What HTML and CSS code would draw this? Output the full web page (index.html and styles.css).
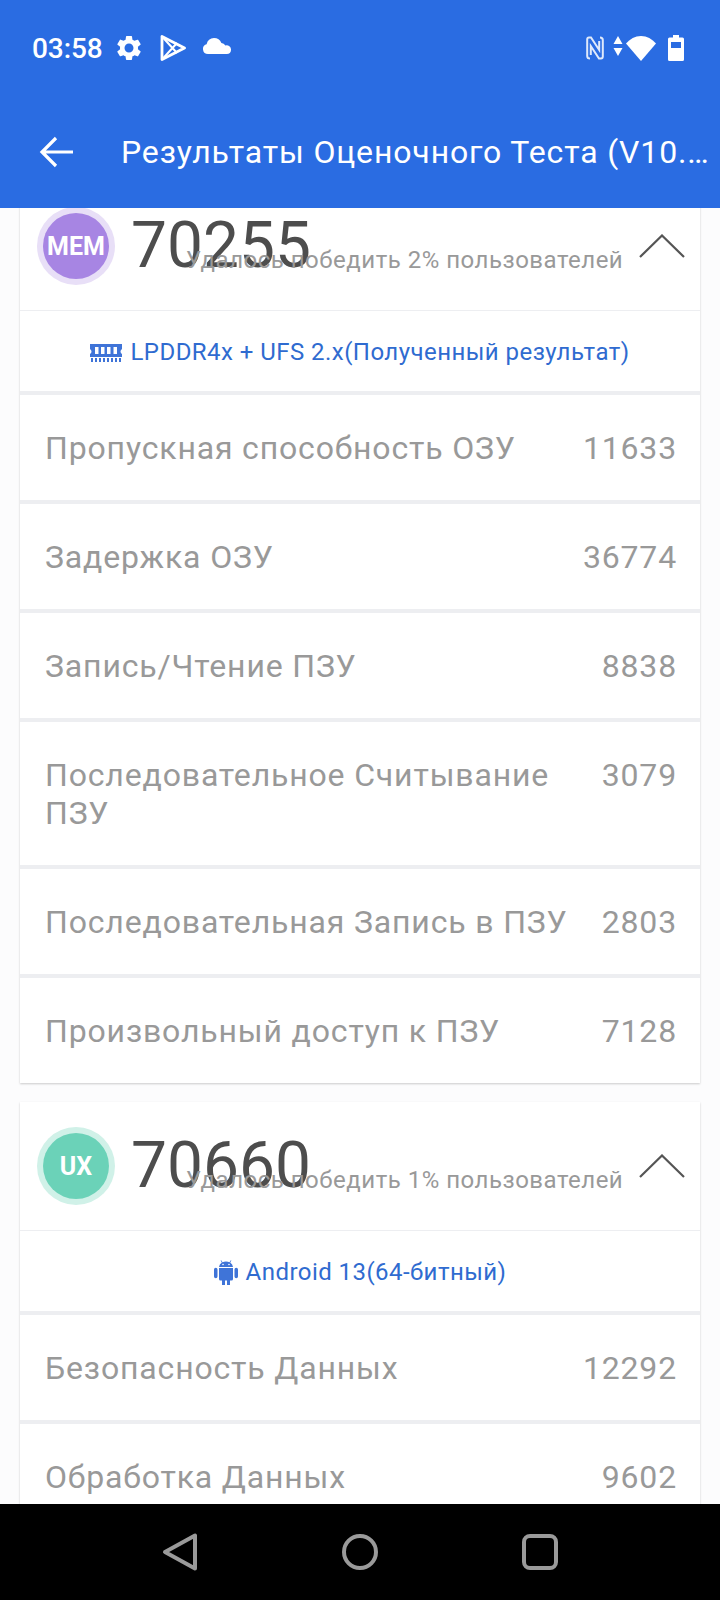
FILE: index.html
```html
<!DOCTYPE html>
<html lang="ru">
<head>
<meta charset="utf-8">
<title>Результаты Оценочного Теста</title>
<link rel="stylesheet" href="styles.css">
</head>
<body>
<div class="app">
  <header class="appbar">
    <div class="status">
      <span class="time">03:58</span>
      <svg class="ic-gear" viewBox="2.4 1.6 19.2 20.8"><path fill="#fff" d="M19.14 12.94c.04-.3.06-.61.06-.94 0-.32-.02-.64-.07-.94l2.03-1.58c.18-.14.23-.41.12-.61l-1.92-3.32c-.12-.22-.37-.29-.59-.22l-2.39.96c-.5-.38-1.03-.7-1.62-.94l-.36-2.54c-.04-.24-.24-.41-.48-.41h-3.84c-.24 0-.43.17-.47.41l-.36 2.54c-.59.24-1.13.57-1.62.94l-2.39-.96c-.22-.08-.47 0-.59.22L2.74 8.87c-.12.21-.08.47.12.61l2.03 1.58c-.05.3-.09.63-.09.94s.02.64.07.94l-2.03 1.58c-.18.14-.23.41-.12.61l1.92 3.32c.12.22.37.29.59.22l2.39-.96c.5.38 1.03.7 1.62.94l.36 2.54c.05.24.24.41.48.41h3.84c.24 0 .44-.17.47-.41l.36-2.54c.59-.24 1.13-.56 1.62-.94l2.39.96c.22.08.47 0 .59-.22l1.92-3.32c.12-.22.07-.47-.12-.61l-2.01-1.58zM12 15.6c-1.98 0-3.6-1.62-3.6-3.6s1.62-3.6 3.6-3.6 3.6 1.62 3.6 3.6-1.62 3.6-3.6 3.6z"/></svg>
      <svg class="ic-play" viewBox="0 0 26 28"><path fill="none" stroke="#fff" stroke-width="2.8" stroke-linejoin="round" d="M2 2.500v23L24.500 14z"/><path fill="none" stroke="#fff" stroke-width="2" d="M2 2.500L17 19M2 25.500L17 9"/></svg>
      <svg class="ic-cloud" viewBox="0 0 28 16"><path fill="#fff" d="M5 16a5 5 0 0 1-1.400-9.800A8 8 0 0 1 11 0a8 8 0 0 1 7.400 5 5.500 5.500 0 0 1 4 2.400A4.400 4.400 0 0 1 28 12a4.200 4.200 0 0 1-4.200 4z"/></svg>
      <span class="status-gap"></span>
      <svg class="ic-nfc" viewBox="0 0 18 24"><path fill="none" stroke="#fff" stroke-width="2" stroke-opacity=".85" d="M4 22.500Q1.200 22.500 1.200 20V3.500Q1.200 1.500 3 1.500H5L13.200 14V5"/><path fill="none" stroke="#fff" stroke-width="2" stroke-opacity=".85" d="M14 1.500Q16.800 1.500 16.800 4V20.500Q16.800 22.500 15 22.500H13L4.800 10V19"/></svg>
      <svg class="ic-arrows" viewBox="0 0 10 20"><path fill="#fff" d="M5 0l4.500 8h-9zM5 20L.5 12h9z"/></svg>
      <svg class="ic-wifi" viewBox="0 0 30 25"><path fill="#fff" d="M15 25L0 7.500C4 3 9 0 15 0s11 3 15 7.500z"/></svg>
      <svg class="ic-batt" viewBox="0 0 16 26"><path fill="#fff" fill-rule="evenodd" d="M5 0h6v2.500h3.500q1.500 0 1.500 1.500v20.500q0 1.500-1.500 1.500h-13Q0 26 0 24.500V4q0-1.500 1.500-1.500H5zM3 7v6h10V7z"/></svg>
    </div>
    <div class="toolbar">
      <svg class="ic-back" viewBox="0 0 34 32"><path fill="none" stroke="#fff" stroke-width="3.200" d="M34 16H3M17 2L3 16l14 14"/></svg>
      <h1 class="title">Результаты Оценочного Теста (V10.…</h1>
    </div>
  </header>

  <main class="scroller">
    <div class="scroll-inner">
      <section class="card">
        <div class="head">
          <div class="badge badge-mem"><span>MEM</span></div>
          <div class="score">70255</div>
          <div class="beat">Удалось победить 2% пользователей</div>
          <svg class="chev" viewBox="0 0 46 24"><path fill="none" stroke="#555" stroke-width="2.200" d="M1 23L23 1.500 45 23"/></svg>
        </div>
        <div class="info">
          <svg class="ic-ram" viewBox="0 0 32 19"><path fill="#3f74d8" fill-rule="evenodd" d="M0 1h32v5q-1.500 1-1.500 2.500T32 11v3H0v-3q1.500-1 1.500-2.500T0 6zM5 4v7h3.500V4zM11 4v7h3.500V4zM17 4v7h3.500V4zM23.500 4v7H27V4z"/><path fill="#3f74d8" d="M1 15h2v4H1zM5 15h2v4H5zM9 15h2v4H9zM13 15h2v4h-2zM17 15h2v4h-2zM21 15h2v4h-2zM25 15h2v4h-2zM29 15h2v4h-2z"/></svg>
          <span>LPDDR4x + UFS 2.x(Полученный результат)</span>
        </div>
        <div class="row"><div class="label">Пропускная способность ОЗУ</div><div class="value">11633</div></div>
        <div class="row"><div class="label">Задержка ОЗУ</div><div class="value">36774</div></div>
        <div class="row"><div class="label">Запись/Чтение ПЗУ</div><div class="value">8838</div></div>
        <div class="row"><div class="label">Последовательное Считывание ПЗУ</div><div class="value">3079</div></div>
        <div class="row"><div class="label">Последовательная Запись в ПЗУ</div><div class="value">2803</div></div>
        <div class="row"><div class="label">Произвольный доступ к ПЗУ</div><div class="value">7128</div></div>
      </section>

      <section class="card">
        <div class="head">
          <div class="badge badge-ux"><span>UX</span></div>
          <div class="score">70660</div>
          <div class="beat">Удалось победить 1% пользователей</div>
          <svg class="chev" viewBox="0 0 46 24"><path fill="none" stroke="#555" stroke-width="2.200" d="M1 23L23 1.500 45 23"/></svg>
        </div>
        <div class="info">
          <svg class="ic-android" viewBox="0 0 24 25"><path fill="#3f74d8" d="M5 8h14v11q0 1.500-1.500 1.500H16V25h-3v-4.500h-2V25H8v-4.500H6.500Q5 20.500 5 19zM0 9.500a1.500 1.500 0 0 1 3.500 0v7a1.500 1.500 0 0 1-3.500 0zM20.500 9.500a1.500 1.500 0 0 1 3.500 0v7a1.500 1.500 0 0 1-3.500 0zM5 7q.3-3 2.800-4.500L6.600.6l.6-.4 1.300 2Q10 1.500 12 1.500t3.500.7l1.300-2 .6.4-1.200 1.900Q18.700 4 19 7z"/><circle cx="9" cy="4.500" r=".8" fill="#fff"/><circle cx="15" cy="4.500" r=".8" fill="#fff"/></svg>
          <span>Android 13(64-битный)</span>
        </div>
        <div class="row"><div class="label">Безопасность Данных</div><div class="value">12292</div></div>
        <div class="row"><div class="label">Обработка Данных</div><div class="value">9602</div></div>
      </section>
    </div>
  </main>

  <nav class="navbar">
    <div class="nav-item"><svg class="nav-ic" viewBox="0 0 36 40"><path fill="none" stroke="#9a9a9a" stroke-width="4" stroke-linejoin="round" d="M33 3.500v33L3 20z"/></svg></div>
    <div class="nav-item"><svg class="nav-ic" viewBox="0 0 36 36"><circle cx="18" cy="18" r="16" fill="none" stroke="#9a9a9a" stroke-width="4"/></svg></div>
    <div class="nav-item"><svg class="nav-ic" viewBox="0 0 36 36"><rect x="2" y="2" width="32" height="32" rx="6" fill="none" stroke="#9a9a9a" stroke-width="4"/></svg></div>
  </nav>
</div>
</body>
</html>
```

FILE: styles.css
```css
* { box-sizing: border-box; }
html, body { margin: 0; padding: 0; }
body { font-family: Roboto, "Liberation Sans", sans-serif; background: #fcfcfd; }
.app { width: 720px; height: 1600px; display: flex; flex-direction: column; overflow: hidden; }

.appbar { height: 208px; flex: none; background: #2a6ce2; color: #fff; padding-top: 32px; position: relative; z-index: 2; }
.status { height: 32px; display: flex; align-items: center; padding: 0 36px 0 32px; }
.time { font-size: 28px; font-weight: 500; width: 85px; letter-spacing: -.1px; }
.ic-gear { width: 24px; height: 26px; }
.ic-play { width: 26px; height: 28px; margin-left: 19px; }
.ic-cloud { width: 28px; height: 16px; margin-left: 17px; margin-top: -4px; }
.status-gap { flex: 1; }
.ic-nfc { width: 18px; height: 24px; }
.ic-arrows { width: 10px; height: 20px; margin-left: 9px; margin-top: -4px; }
.ic-wifi { width: 30px; height: 25px; margin-left: 3px; }
.ic-batt { width: 16px; height: 26px; margin-left: 12px; }

.toolbar { display: flex; align-items: center; height: 64px; margin-top: 56px; padding-left: 39px; }
.ic-back { width: 34px; height: 32px; flex: none; }
.title { margin: 0 0 0 48px; font-size: 32px; font-weight: 400; letter-spacing: .86px; white-space: nowrap; }

.scroller { flex: 1; overflow: hidden; }
.scroll-inner { margin-top: -26px; padding: 0 20px; }
.card { margin-bottom: 19px; background: #edeef1; box-shadow: 0 1px 2px rgba(0,0,0,.2); }

.head { height: 128px; background: #fff; display: flex; align-items: center; padding-left: 17px; position: relative; }
.badge { width: 78px; height: 78px; border-radius: 50%; flex: none; display: flex; align-items: center; justify-content: center; color: #fff; font-weight: 700; font-size: 25px; }
.badge span { width: 66px; height: 66px; border-radius: 50%; display: flex; align-items: center; justify-content: center; }
.badge-mem { background: #e8dff7; }
.badge-mem span { background: #a785e3; }
.badge-ux { background: #d0f1e8; }
.badge-ux span { background: #6bd2b8; }
.score { font-size: 64px; color: #4d4d4d; margin-left: 16px; line-height: 76px; }
.beat { position: absolute; left: 166px; top: 61px; font-size: 24px; line-height: 34px; color: #999; letter-spacing: .5px; white-space: nowrap; }
.chev { position: absolute; left: 619px; top: 52px; width: 46px; height: 24px; }

.info { height: 80px; margin-top: 1px; padding-top: 2px; background: #fff; display: flex; align-items: center; justify-content: center; gap: 8px; color: #2f6bd0; font-size: 24px; letter-spacing: .45px; }
.ic-ram { width: 32px; height: 19px; }
.ic-android { width: 24px; height: 25px; }

.row { margin-top: 4px; padding: 34px 23px 33px 25px; background: #fff; display: flex; justify-content: space-between; gap: 12px; font-size: 32px; line-height: 38px; color: #999; letter-spacing: .84px; }
.value { flex: none; }

.navbar { height: 96px; flex: none; background: #000; display: flex; position: relative; z-index: 2; }
.nav-item { width: 180px; display: flex; align-items: center; justify-content: center; }
.nav-item:first-child { margin-left: 90px; }
.nav-ic { width: 36px; height: 40px; }
```
